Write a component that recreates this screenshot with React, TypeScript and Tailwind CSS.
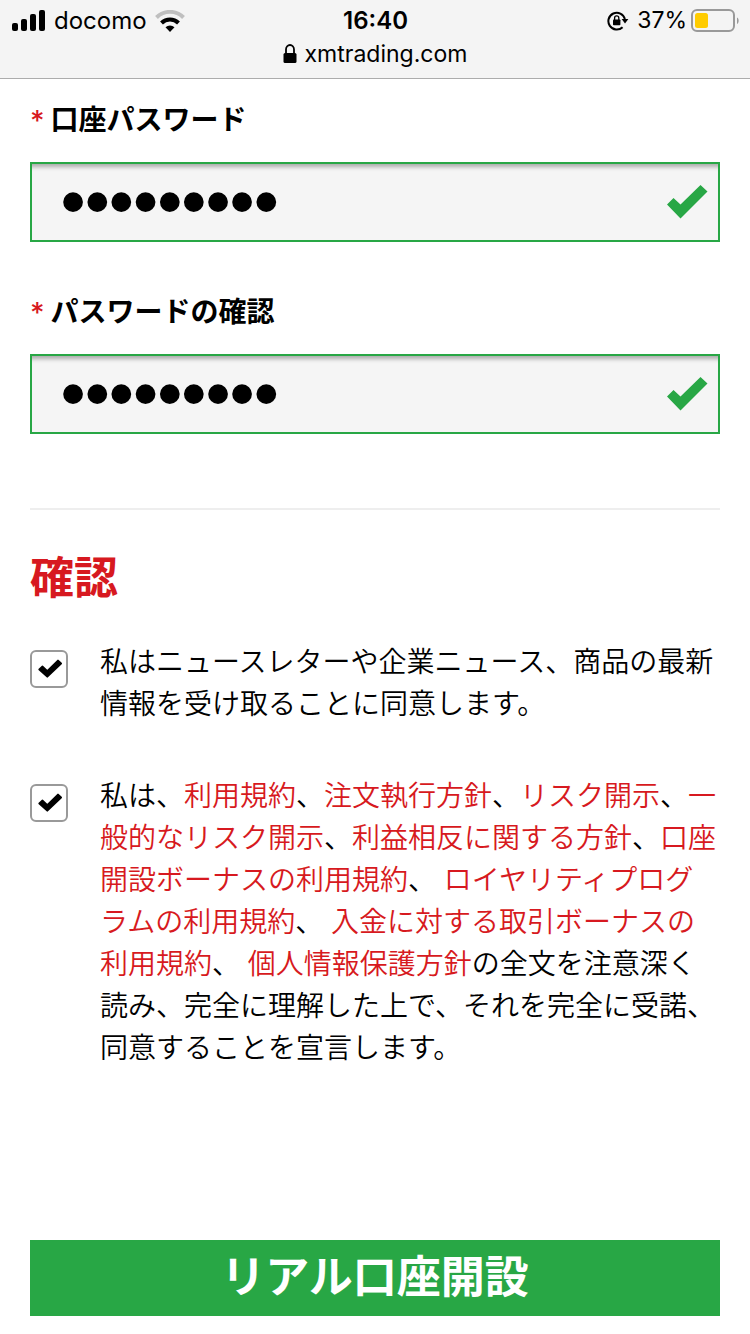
import { Fragment, useState } from 'react';

const FONT = 'font-["Liberation_Sans","Noto_Sans_CJK_JP",sans-serif]';

const PASSWORD_FIELDS = [
  { id: 'password', label: '口座パスワード' },
  { id: 'password-confirm', label: 'パスワードの確認' },
];

const DOCUMENTS = [
  { title: '利用規約', after: '、' },
  { title: '注文執行方針', after: '、' },
  { title: 'リスク開示', after: '、' },
  { title: '一般的なリスク開示', after: '、' },
  { title: '利益相反に関する方針', after: '、' },
  { title: '口座開設ボーナスの利用規約', after: '、 ' },
  { title: 'ロイヤリティプログラムの利用規約', after: '、 ' },
  { title: '入金に対する取引ボーナスの利用規約', after: '、 ' },
  { title: '個人情報保護方針', after: '' },
];

function SignalIcon() {
  return (
    <svg width="34" height="22" viewBox="0 0 34 22" aria-hidden="true">
      <rect x="0" y="13" width="6" height="8" rx="2" />
      <rect x="9" y="9" width="6" height="12" rx="2" />
      <rect x="18" y="4" width="6" height="17" rx="2" />
      <rect x="27" y="0" width="6" height="21" rx="2" />
    </svg>
  );
}

function WifiIcon() {
  return (
    <svg width="30" height="22" viewBox="0 0 30 22" aria-hidden="true">
      <path d="M1.500 7.500a19 19 0 0 1 27 0" fill="none" stroke="#bfbfbf" strokeWidth="4" />
      <path d="M6.500 13a12 12 0 0 1 17 0" fill="none" stroke="#000" strokeWidth="4" />
      <path d="M10.500 17.300a6.400 6.400 0 0 1 9 0L15 22z" />
    </svg>
  );
}

function RotationLockIcon() {
  return (
    <svg width="22" height="20" viewBox="0 0 22 20" aria-hidden="true">
      <path
        d="M15.600 16.200A8.400 8.400 0 1 1 17.900 8"
        fill="none"
        stroke="#000"
        strokeWidth="2"
      />
      <path d="M14.600 8h6.800L18 12.600z" />
      <rect x="6" y="8.500" width="7.400" height="5.800" rx="0.800" />
      <path d="M7.600 9V7a2.100 2.100 0 0 1 4.200 0v2" fill="none" stroke="#000" strokeWidth="1.300" />
    </svg>
  );
}

function BatteryIcon() {
  return (
    <svg width="48" height="24" viewBox="0 0 48 24" aria-hidden="true">
      <rect x="1" y="1" width="42" height="21" rx="5" fill="none" stroke="#999" strokeWidth="2" />
      <rect x="4" y="4" width="13" height="15" rx="2.500" fill="#ffcc00" />
      <path d="M46 8.500c2.200 1 2.200 5.500 0 6.500z" fill="#999" />
    </svg>
  );
}

function LockIcon() {
  return (
    <svg width="14" height="20" viewBox="0 0 14 20" aria-hidden="true">
      <rect x="0.500" y="9" width="13" height="10" rx="1.500" />
      <path d="M3 9.500V5.500a4 4.500 0 0 1 8 0v4" fill="none" stroke="#000" strokeWidth="1.800" />
    </svg>
  );
}

function StatusBar() {
  return (
    <header className="border-b border-[#acacac] bg-[#f4f4f4] text-2xl text-black font-[Inter,sans-serif]">
      <div className="grid grid-cols-3 items-center h-10 pl-3 pr-[11px] pt-px">
        <div className="flex items-center gap-2">
          <SignalIcon />
          <span>docomo</span>
          <WifiIcon />
        </div>
        <span className="text-center font-semibold">16:40</span>
        <div className="flex items-center justify-end gap-1">
          <RotationLockIcon />
          <span className="ml-1 text-[23px]">37%</span>
          <BatteryIcon />
        </div>
      </div>
      <div className="flex items-center justify-center gap-2 h-[38px] pb-2.5">
        <LockIcon />
        <span className="text-[23px]">xmtrading.com</span>
      </div>
    </header>
  );
}

function PasswordField({ id, label }: { id: string; label: string }) {
  const [value, setValue] = useState('abcd12345');

  return (
    <div className="mb-[51px]">
      <label
        htmlFor={id}
        className="flex gap-1.5 mb-[21px] text-[28px] leading-10 font-bold text-black"
      >
        <span className="font-medium text-[#d71920] font-[Inter,sans-serif]">*</span>
        {label}
      </label>
      <div className="relative">
        {/* large bold type so the masking bullets come out big and close together */}
        <input
          id={id}
          type="password"
          value={value}
          onChange={(e) => setValue(e.target.value)}
          className='block w-full h-20 pl-[29px] pr-16 border-2 border-[#28a745] bg-[#f5f5f5] font-["Liberation_Sans",sans-serif] text-[69px] font-bold text-black shadow-[inset_0_7px_4px_-4px_rgba(0,0,0,0.3)] outline-none'
        />
        <svg
          className="absolute right-3 top-[22px]"
          width="42"
          height="36"
          viewBox="0 0 42 36"
          fill="#28a745"
          aria-hidden="true"
        >
          <path d="M1 20.500 7.500 14l7 6.500L34.500 1 41.500 7.500 14.500 34.500z" />
        </svg>
      </div>
    </div>
  );
}

function ConsentRow({ id, children }: { id: string; children: React.ReactNode }) {
  return (
    <div className="flex items-start gap-8 mb-[50px]">
      <span className="relative shrink-0 mt-2">
        <input
          id={id}
          type="checkbox"
          defaultChecked
          className="peer block size-[38px] appearance-none rounded-md border-2 border-[#999] bg-white"
        />
        <svg
          className="pointer-events-none absolute left-2 top-2 hidden peer-checked:block"
          width="24"
          height="22"
          viewBox="0 0 24 22"
          stroke="#000"
          strokeWidth="2"
          strokeLinejoin="round"
          aria-hidden="true"
        >
          <path d="M1.400 11.400 4.300 8.600l5 4.600L20 2.600l3 2.900L9.300 18.600z" />
        </svg>
      </span>
      <label htmlFor={id} className="flex-1 text-[28px] leading-[42px] font-[350] text-black">
        {children}
      </label>
    </div>
  );
}

export default function App() {
  return (
    <div className={`min-h-screen bg-white ${FONT}`} lang="ja">
      <StatusBar />
      <form className="px-[30px] pt-[22px] pb-[18px]" onSubmit={(e) => e.preventDefault()}>
        {PASSWORD_FIELDS.map((field) => (
          <PasswordField key={field.id} {...field} />
        ))}

        <hr className="mt-[74px] border-t-2 border-[#eee]" />

        <h2 className="mt-[37px] mb-[31px] text-[44px] leading-[64px] font-bold text-[#d71920]">
          確認
        </h2>

        <ConsentRow id="newsletter">
          私はニュースレターや企業ニュース、商品の最新情報を受け取ることに同意します。
        </ConsentRow>

        <ConsentRow id="terms">
          私は、
          {DOCUMENTS.map((doc) => (
            <Fragment key={doc.title}>
              <a href="#" className="text-[#d71920]">
                {doc.title}
              </a>
              {doc.after}
            </Fragment>
          ))}
          の全文を注意深く読み、完全に理解した上で、それを完全に受諾、同意することを宣言します。
        </ConsentRow>

        <button
          type="submit"
          className="block w-full h-[76px] mt-[170px] bg-[#28a745] text-[44px] leading-[64px] font-bold text-white"
        >
          リアル口座開設
        </button>
      </form>
    </div>
  );
}
